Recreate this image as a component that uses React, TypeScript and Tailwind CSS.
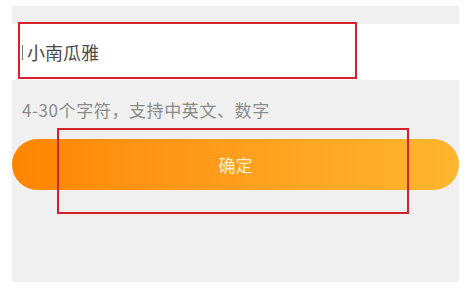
import React from "react";

export default function App() {
  const font = { fontFamily: '"Noto Sans CJK SC", "Noto Sans", sans-serif' };
  return (
    <div className="w-[469px] h-[291px] bg-white relative overflow-hidden" style={font}>
      <div className="pt-[6px] pl-[12px] pr-[10px]">
        <div className="w-[447px] h-[276px] bg-[#f0f0f0] rounded-b-[3px] flex flex-col">
          <div className="h-[18px]" />
          <div className="h-[56px] bg-white flex items-center pl-[10px]">
            <span className="w-px h-[15px] bg-[#777] mr-[4px]" />
            <span className="text-[18px] text-[#4a4a4a] leading-none">小南瓜雅</span>
          </div>
          <div className="h-[59px] flex items-center pl-[10px] pb-[1px]">
            <span className="text-[17px] tracking-[0.6px] text-[#8a8a8a] leading-none">4-30个字符，支持中英文、数字</span>
          </div>
          <button className="h-[51px] w-full rounded-full bg-gradient-to-r from-[#ff8500] to-[#ffb62f] flex items-center justify-center">
            <span className="text-[17px] text-[#fff0d0] leading-none">确定</span>
          </button>
        </div>
      </div>
      <div className="absolute left-[18px] top-[22px] w-[339px] h-[57px] border-2 border-[#d3222e]" />
      <div className="absolute left-[57px] top-[128px] w-[352px] h-[86px] border-2 border-[#d3222e]" />
    </div>
  );
}
